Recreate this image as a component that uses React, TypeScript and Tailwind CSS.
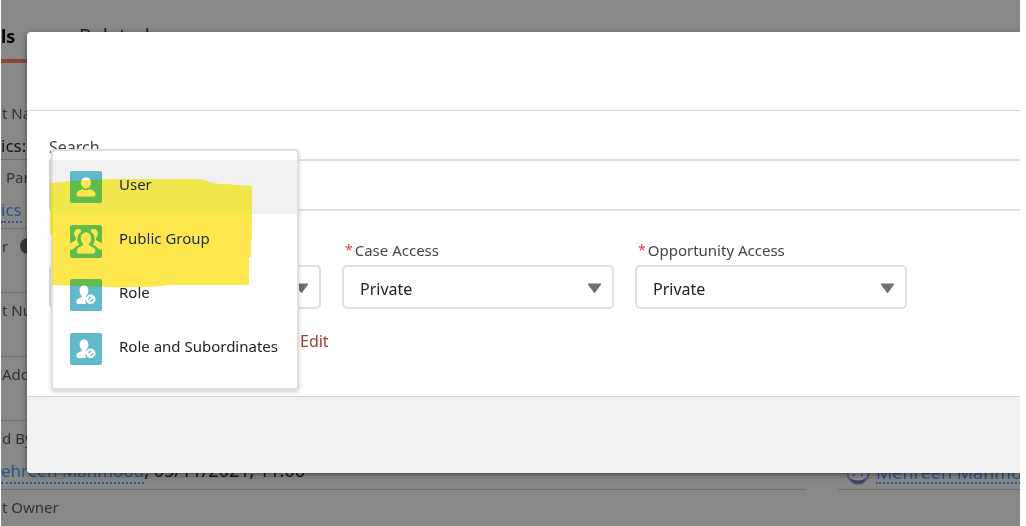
import type { ReactNode } from "react";

function Caret() {
  return (
    <svg className="pointer-events-none absolute top-[18px] right-3 h-[11px] w-[15px]" viewBox="0 0 15 11" aria-hidden="true">
      <path d="M1.600.6h11.800a.7.7 0 0 1 .5 1.100L8.200 9.600a.9.9 0 0 1-1.400 0L1.100 1.700a.7.7 0 0 1 .5-1.100z" fill="#706e6b" />
    </svg>
  );
}

function AccessField({ id, label, children }: { id: string; label: string; children?: ReactNode }) {
  return (
    <div className="w-[272px]">
      <div className="flex min-h-5 gap-[2px] pl-[3px] text-[15px] leading-5 text-[#444]">{children}</div>
      <div className="relative mt-[5px]">
        <select
          id={id}
          aria-label={label}
          className="block h-[44px] w-full appearance-none rounded-[5px] border-2 border-[#e0dfde] bg-white px-4 pt-[3px] text-base text-[#222]"
        >
          <option>Private</option>
        </select>
        <Caret />
      </div>
    </div>
  );
}

function RequiredLabel({ htmlFor, text }: { htmlFor: string; text: string }) {
  return (
    <>
      <span className="text-sm leading-5 text-[#e03a4a]">*</span>
      <label htmlFor={htmlFor}>{text}</label>
    </>
  );
}

function UserIcon() {
  return (
    <svg viewBox="0 0 32 32" className="h-8 w-8" aria-hidden="true">
      <rect width="32" height="32" rx="2" fill="#62b9cc" />
      <ellipse cx="16" cy="11.800" rx="5" ry="5.600" fill="#fff" />
      <path d="M6.500 23.500c0-3 2.600-4.300 6-5.300 1.900 1.500 5.100 1.500 7 0 3.400 1 6 2.300 6 5.300 0 1.300-.8 1.900-2 1.900h-15c-1.200 0-2-.6-2-1.900z" fill="#fff" />
    </svg>
  );
}

function GroupIcon() {
  return (
    <svg viewBox="0 0 32 33" className="h-[33px] w-8" aria-hidden="true">
      <rect width="32" height="33" rx="2" fill="#62b9cc" />
      <g fill="#fff">
        <path d="M11.300 5.300C10 3.500 6.500 3.300 5 5.800c-1.300 2.300-.7 5.200.9 7.200.6 1 .2 1.800-.7 2.400L0 18.500V24c.8.800 2 .9 3 .2 1.200-2 3.500-3.300 6-4.300-1.700-2.600-2.400-5.900-1.200-9.200.5-1.600 1.600-2.700 3-3.500z" />
        <path d="M20.700 5.300c1.300-1.800 4.800-2 6.300.5 1.300 2.300.7 5.200-.9 7.200-.6 1-.2 1.800.7 2.400l5.200 3.100V24c-.8.800-2 .9-3 .2-1.200-2-3.500-3.300-6-4.300 1.700-2.600 2.400-5.900 1.200-9.200-.5-1.600-1.600-2.700-3-3.500z" />
        <path d="M16 7.400c3 0 5.200 2.400 5.200 5.600 0 2-.7 3.900-2 5.300-.8 1-.5 2 .6 2.500 3 1.300 5.400 2.500 5.400 5.700 0 1.300-.8 2-2 2H8.800c-1.200 0-2-.7-2-2 0-3.200 2.400-4.400 5.400-5.700 1.100-.5 1.400-1.500.6-2.500-1.300-1.400-2-3.300-2-5.300 0-3.200 2.200-5.600 5.200-5.600z" />
      </g>
    </svg>
  );
}

function RoleIcon() {
  return (
    <svg viewBox="0 0 32 32" className="h-8 w-8" aria-hidden="true">
      <rect width="32" height="32" rx="2" fill="#62b9cc" />
      <path d="M14 6.500c2.700 0 4.400 2.300 4.400 5 0 2-.8 3.600-1.900 5-.7 1-.3 1.500.5 2-1.600 1.700-1.900 4.100-.9 6.500H8.200C7 25 6.300 24.300 6.300 23c0-2.700 2.200-3.700 4.600-4.600 1-.4 1.200-1 .6-1.900-1.100-1.400-1.900-3-1.900-5 0-2.700 1.700-5 4.400-5z" fill="#fff" />
      <circle cx="20.700" cy="20.300" r="4.800" fill="#fff" />
      <path d="M18.500 20.600a2.300 2.300 0 0 1 2.700-2.600zM22.900 20a2.300 2.300 0 0 1-2.700 2.600z" fill="#62b9cc" stroke="#62b9cc" strokeWidth=".7" />
    </svg>
  );
}

function Option({ icon, label, active = false }: { icon: ReactNode; label: string; active?: boolean }) {
  return (
    <li role="option" aria-selected={active}>
      <button
        type="button"
        className={
          active
            ? "flex h-[54px] w-full items-center gap-[17px] bg-[#f1f1f1] pl-[17px] text-left"
            : "flex h-[54px] w-full items-center gap-[17px] bg-white pl-[17px] text-left"
        }
      >
        {icon}
        <span className="pb-[6px] text-[15px] leading-5 whitespace-nowrap text-[#222]">{label}</span>
      </button>
    </li>
  );
}

function SearchMenu() {
  return (
    <ul
      role="listbox"
      aria-label="Search"
      className="absolute top-[117px] left-[24px] w-[248px] rounded-[4px] border-2 border-[#e0dfde] bg-white pt-[9px] pb-3 shadow-[0_2px_4px_rgba(0,0,0,0.2)]"
    >
      <Option icon={<UserIcon />} label="User" active />
      <Option icon={<GroupIcon />} label="Public Group" />
      <Option icon={<RoleIcon />} label="Role" />
      <Option icon={<RoleIcon />} label="Role and Subordinates" />
    </ul>
  );
}

function Highlighter() {
  return (
    <svg
      className="pointer-events-none absolute top-[147px] left-[23px] h-[110px] w-[204px] mix-blend-darken"
      viewBox="0 0 204 110"
      aria-hidden="true"
    >
      <path d="M0 4Q30 1 60 0H149Q154 1 160 3Q166 5 175 5L202 7V60H201V78H199V106H120Q95 109 60 108L2 106V55H0Z" fill="#fde74c" />
    </svg>
  );
}

function Field({ label, tight = false, children }: { label: ReactNode; tight?: boolean; children?: ReactNode }) {
  return (
    <div className={tight ? "h-16 border-b border-[#6e6e6e] pt-[7px]" : "min-h-16 border-b border-[#6e6e6e] pt-[7px]"}>
      <div className="flex items-center gap-3 pl-px text-[15px] leading-5 text-[#303030]">{label}</div>
      {children && <div className="mt-2 mb-[5px] h-7 text-lg leading-7 text-[#111]">{children}</div>}
    </div>
  );
}

function RecordPage() {
  return (
    <div className="min-h-screen whitespace-nowrap">
      <div className="flex h-[63px] items-end">
        <span className="h-full w-[60px] border-b-4 border-[#8b4637] pt-[22px] text-lg leading-7 font-bold text-black">ls</span>
        <span className="h-full pt-[22px] pl-[18px] text-xl leading-7 text-[#222]">Related</span>
      </div>
      <div className="grid grid-cols-[805px_1fr] gap-8 pt-[33px]">
        <div>
          <Field label="t Name" tight>
            <span className="text-[17px]">ics:</span>
          </Field>
          <Field label={<span className="pl-1">Parent</span>}>
            <a href="#parent" className="border-b-2 border-dotted border-[#27568f] text-[17px] text-[#27568f]">ics</a>
          </Field>
          <Field
            label={
              <>
                r
                <svg className="h-4 w-4" viewBox="0 0 16 16" aria-hidden="true">
                  <circle cx="8" cy="8" r="8" fill="#3a3836" />
                </svg>
              </>
            }
          />
          <Field label="t Number" />
          <Field label="Address" />
          <Field label="d By">
            <a href="#creator" className="border-b-2 border-dotted border-[#27568f] text-[17px] text-[#27568f]">ehreen Mahmood</a>, 05/11/2021, 11:06
          </Field>
          <Field label="t Owner" />
        </div>
        <div className="flex flex-col justify-end pb-16">
          <div className="flex items-center gap-[6px] border-b border-[#6e6e6e] pb-1 pl-2 leading-7">
            <svg className="h-6 w-6 shrink-0" viewBox="0 0 24 24" aria-hidden="true">
              <circle cx="12" cy="12" r="10.500" fill="#8e9098" stroke="#5b6175" strokeWidth="2" />
              <path d="M4 17q8 5 16 0q-2 6-8 6t-8-6z" fill="#3e4766" />
              <circle cx="8" cy="14" r="1" fill="#444c66" />
              <circle cx="16" cy="14" r="1" fill="#444c66" />
            </svg>
            <a href="#owner" className="border-b-2 border-dotted border-[#27568f] text-lg leading-5 text-[#27568f]">Mehreen Mahmood</a>
          </div>
        </div>
      </div>
    </div>
  );
}

function ShareDialog() {
  return (
    <section
      role="dialog"
      aria-label="Share"
      className="absolute top-8 right-0 left-[26px] rounded-l-[4px] bg-white shadow-[0_2px_6px_rgba(0,0,0,0.45)]"
    >
      <header className="h-[79px] border-b border-[#d4d4d4]" />
      <div className="h-[285px] overflow-hidden pl-[22px]">
        <label htmlFor="search" className="block pt-[26px] text-base leading-5 text-[#444]">Search</label>
        <input id="search" type="text" className="mt-[2px] block h-[52px] w-full rounded-l-[4px] border-2 border-r-0 border-[#e0dfde]" />
        <div className="mt-[29px] flex gap-[21px]">
          <AccessField id="account-access" label="Account Access" />
          <AccessField id="case-access" label="Case Access">
            <RequiredLabel htmlFor="case-access" text="Case Access" />
          </AccessField>
          <AccessField id="opportunity-access" label="Opportunity Access">
            <RequiredLabel htmlFor="opportunity-access" text="Opportunity Access" />
          </AccessField>
        </div>
        <a href="#edit" className="mt-5 ml-[251px] inline-block text-base leading-6 text-[#a53a32]">Edit</a>
      </div>
      <footer className="h-[77px] rounded-bl-[4px] border-t border-[#d4d4d4] bg-[#f1f1f1]" />
      <SearchMenu />
      <Highlighter />
    </section>
  );
}

export default function App() {
  return (
    <div className="min-h-screen bg-white pr-[6px] pl-px font-['Noto_Sans','Open_Sans',sans-serif]">
      <main className="relative h-screen overflow-hidden bg-[#888]">
        <RecordPage />
        <ShareDialog />
      </main>
    </div>
  );
}
